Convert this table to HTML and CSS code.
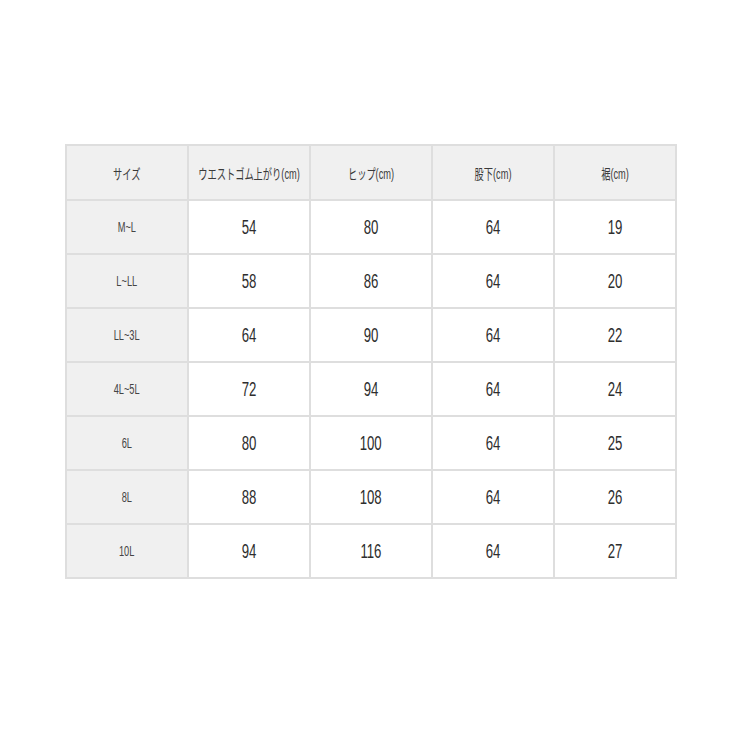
FILE: index.html
```html
<!DOCTYPE html>
<html lang="ja">
<head>
<meta charset="utf-8">
<link rel="stylesheet" href="styles.css">
</head>
<body>
<div class="page">
  <div class="size-table">
    <div class="cell head"><span class="t">サイズ</span></div>
    <div class="cell head"><span class="t">ウエストゴム上がり(cm)</span></div>
    <div class="cell head"><span class="t">ヒップ(cm)</span></div>
    <div class="cell head"><span class="t">股下(cm)</span></div>
    <div class="cell head"><span class="t">裾(cm)</span></div>

    <div class="cell label"><span class="t">M~L</span></div>
    <div class="cell num"><span class="t">54</span></div>
    <div class="cell num"><span class="t">80</span></div>
    <div class="cell num"><span class="t">64</span></div>
    <div class="cell num"><span class="t">19</span></div>

    <div class="cell label"><span class="t">L~LL</span></div>
    <div class="cell num"><span class="t">58</span></div>
    <div class="cell num"><span class="t">86</span></div>
    <div class="cell num"><span class="t">64</span></div>
    <div class="cell num"><span class="t">20</span></div>

    <div class="cell label"><span class="t">LL~3L</span></div>
    <div class="cell num"><span class="t">64</span></div>
    <div class="cell num"><span class="t">90</span></div>
    <div class="cell num"><span class="t">64</span></div>
    <div class="cell num"><span class="t">22</span></div>

    <div class="cell label"><span class="t">4L~5L</span></div>
    <div class="cell num"><span class="t">72</span></div>
    <div class="cell num"><span class="t">94</span></div>
    <div class="cell num"><span class="t">64</span></div>
    <div class="cell num"><span class="t">24</span></div>

    <div class="cell label"><span class="t">6L</span></div>
    <div class="cell num"><span class="t">80</span></div>
    <div class="cell num"><span class="t">100</span></div>
    <div class="cell num"><span class="t">64</span></div>
    <div class="cell num"><span class="t">25</span></div>

    <div class="cell label"><span class="t">8L</span></div>
    <div class="cell num"><span class="t">88</span></div>
    <div class="cell num"><span class="t">108</span></div>
    <div class="cell num"><span class="t">64</span></div>
    <div class="cell num"><span class="t">26</span></div>

    <div class="cell label"><span class="t">10L</span></div>
    <div class="cell num"><span class="t">94</span></div>
    <div class="cell num"><span class="t">116</span></div>
    <div class="cell num"><span class="t">64</span></div>
    <div class="cell num"><span class="t">27</span></div>
  </div>
</div>
</body>
</html>
```
FILE: styles.css
```css
html, body {
  margin: 0;
  padding: 0;
  background: #ffffff;
}
.page {
  width: 740px;
  height: 740px;
  padding: 144px 0 0 65px;
  box-sizing: border-box;
}
.size-table {
  width: 612px;
  box-sizing: border-box;
  display: grid;
  grid-template-columns: repeat(5, minmax(0, 1fr));
  grid-template-rows: 53px repeat(7, 52px);
  gap: 2px;
  border: 2px solid #dedede;
  background: #dedede;
  font-family: "Liberation Sans", "Noto Sans CJK JP", sans-serif;
  color: #333333;
}
.cell {
  display: flex;
  align-items: center;
  justify-content: center;
  min-width: 0;
  overflow: visible;
  background: #ffffff;
}
.cell.head,
.cell.label {
  background: #f0f0f0;
}
.t {
  display: inline-block;
  white-space: nowrap;
  transform: scaleX(0.66);
}
.head .t {
  font-size: 14px;
  color: #3a3a3a;
}
.label .t {
  font-size: 14px;
  color: #444444;
}
.num .t {
  font-size: 20px;
  color: #2e2e2e;
}
```
